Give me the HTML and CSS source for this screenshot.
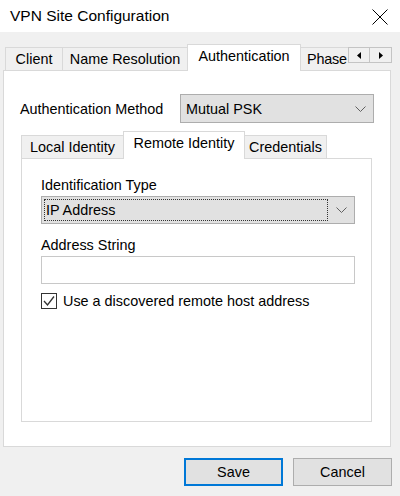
FILE: index.html
```html
<!DOCTYPE html>
<html>
<head>
<meta charset="utf-8">
<title>VPN Site Configuration</title>
<link rel="stylesheet" href="styles.css">
</head>
<body>
<div class="window">
  <div class="titlebar">
    <span class="title">VPN Site Configuration</span>
    <svg class="close" width="16" height="16" viewBox="0 0 16 16"><path d="M0.5 0.5 L15.5 15.5 M15.5 0.5 L0.5 15.5" stroke="#000" stroke-width="1" fill="none"/></svg>
  </div>
  <div class="body">
    <div class="tabs outer-tabs">
      <div class="tab t-client">Client</div>
      <div class="tab t-name">Name Resolution</div>
      <div class="tab active t-auth">Authentication</div>
      <div class="tab t-phase">Phase</div>
      <div class="scroller">
        <div class="sbtn"><svg width="4" height="7" viewBox="0 0 4 7"><path d="M4 0 L0 3.5 L4 7 Z" fill="#000"/></svg></div>
        <div class="sbtn"><svg width="4" height="7" viewBox="0 0 4 7"><path d="M0 0 L4 3.5 L0 7 Z" fill="#000"/></svg></div>
      </div>
    </div>
    <div class="panel outer-panel">
      <div class="auth-row">
        <span class="auth-label">Authentication Method</span>
        <div class="select auth-select">
          <span class="sel-text">Mutual PSK</span>
          <svg class="chev" width="11" height="6" viewBox="0 0 11 6"><polyline points="0.5,0.5 5.5,5.5 10.5,0.5" fill="none" stroke="#606060" stroke-width="1"/></svg>
        </div>
      </div>
      <div class="tabs inner-tabs">
        <div class="tab t-local">Local Identity</div>
        <div class="tab active t-remote">Remote Identity</div>
        <div class="tab t-cred">Credentials</div>
      </div>
      <div class="panel inner-panel">
        <div class="field-label">Identification Type</div>
        <div class="select id-select">
          <span class="focus-rect">IP Address</span>
          <svg class="chev" width="11" height="6" viewBox="0 0 11 6"><polyline points="0.5,0.5 5.5,5.5 10.5,0.5" fill="none" stroke="#606060" stroke-width="1"/></svg>
        </div>
        <div class="field-label second">Address String</div>
        <div class="textbox"></div>
        <div class="check-row">
          <span class="box"><svg width="14" height="14" viewBox="0 0 14 14"><polyline points="2,7 5.5,11 12,2.5" fill="none" stroke="#333" stroke-width="1.3"/></svg></span>
          <span class="check-text">Use a discovered remote host address</span>
        </div>
      </div>
    </div>
    <div class="buttons">
      <button class="btn primary">Save</button>
      <button class="btn">Cancel</button>
    </div>
  </div>
</div>
</body>
</html>
```
FILE: styles.css
```css
* { box-sizing: border-box; }
html, body { margin: 0; padding: 0; }
body {
  width: 400px;
  height: 496px;
  overflow: hidden;
  font-family: "Liberation Sans", Arial, sans-serif;
  font-size: 14.4px;
  color: #000;
  background: #f0f0f0;
}
.window { width: 400px; height: 496px; display: flex; flex-direction: column; }
.titlebar {
  height: 32px;
  background: #fff;
  display: flex;
  align-items: center;
  justify-content: space-between;
  padding: 0 12px 0 10px;
}
.title { font-size: 15.5px; }
.close { display: block; margin-top: 2px; }
.body { flex: 1; background: #f0f0f0; padding-top: 12px; }

.tabs { display: flex; align-items: flex-end; margin-bottom: -1px; }
.tab {
  height: 23px;
  margin-bottom: 1px;
  border: 1px solid #d9d9d9;
  border-bottom: none;
  border-right: none;
  background: #f0f0f0;
  display: flex;
  align-items: center;
  justify-content: center;
  white-space: nowrap;
  overflow: hidden;
  line-height: 1;
}
.tab.active {
  position: relative;
  z-index: 1;
  background: #fff;
  border-right: 1px solid #d9d9d9;
  margin-bottom: 0;
  padding-bottom: 4px;
}
.tab.active + .tab { border-left: none; }
.outer-tabs { margin-left: 5px; }
.outer-tabs .tab.active { height: 27px; }
.t-client { width: 57px; }
.t-name { width: 125px; }
.t-auth { width: 114px; }
.t-phase { width: 47px; justify-content: flex-start; padding-left: 6px; letter-spacing: -0.2px; }
.scroller {
  align-self: flex-start;
  margin-top: 3px;
  display: flex;
}
.sbtn {
  width: 22px;
  height: 16px;
  border: 1px solid #c4c4c4;
  background: #f0f0f0;
  display: flex;
  align-items: center;
  justify-content: center;
}
.sbtn + .sbtn { border-left: none; }
.sbtn svg { display: block; }

.panel { background: #fff; border: 1px solid #d9d9d9; }
.outer-panel {
  margin-left: 3px;
  width: 388px;
  height: 377px;
  padding: 23px 0 0 16px;
}
.auth-row { display: flex; align-items: center; height: 29px; }
.auth-label { width: 160px; }
.select {
  background: #e1e1e1;
  border: 1px solid #adadad;
  display: flex;
  align-items: center;
  justify-content: space-between;
}
.auth-select { width: 194px; height: 29px; padding: 0 7px 0 5px; }
.chev { display: block; }

.inner-tabs { margin-top: 8px; margin-left: 1px; }
.inner-tabs .tab.active { height: 28px; padding-bottom: 5px; }
.t-local { width: 102px; }
.t-remote { width: 122px; }
.t-cred { width: 82px; border-right: 1px solid #d9d9d9 !important; }
.inner-panel {
  margin-left: 1px;
  width: 351px;
  height: 264px;
  padding: 17px 0 0 19px;
}
.field-label { line-height: 18px; height: 18px; margin-bottom: 2px; }
.field-label.second { margin-top: 12px; }
.id-select { width: 314px; height: 28px; padding: 2px 7px 2px 2px; }
.focus-rect {
  width: 284px;
  height: 22px;
  border: 1px dotted #333;
  display: flex;
  align-items: center;
  padding-left: 1px;
}
.textbox {
  width: 314px;
  height: 28px;
  border: 1px solid #c8c8c8;
  background: #fff;
}
.check-row { display: flex; align-items: center; margin-top: 9px; }
.box {
  width: 16px;
  height: 16px;
  border: 1px solid #333;
  background: #fff;
  display: flex;
  align-items: center;
  justify-content: center;
  margin-right: 6px;
}
.box svg { display: block; }

.buttons {
  display: flex;
  justify-content: flex-end;
  gap: 10px;
  padding: 11px 8px 0 0;
}
.btn {
  width: 99px;
  height: 28px;
  background: #e1e1e1;
  border: 1px solid #adadad;
  font-family: inherit;
  font-size: 14.4px;
  color: #000;
  padding: 0;
}
.btn.primary { border: 2px solid #0078d7; }
```
